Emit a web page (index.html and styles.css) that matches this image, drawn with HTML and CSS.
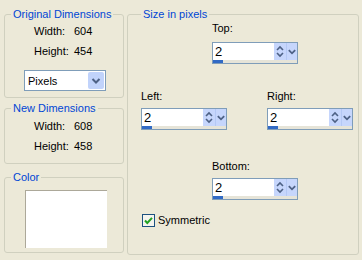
FILE: index.html
```html
<!DOCTYPE html>
<html lang="en">
<head>
    <meta charset="UTF-8">
    <title>Canvas Size</title>
    <link rel="stylesheet" href="styles.css">
</head>
<body>
    <div class="dialog">
        <div class="left-col">
            <fieldset class="group group-orig">
                <legend>Original Dimensions</legend>
                <div class="dims">
                    <span>Width:</span><span>604</span>
                    <span>Height:</span><span>454</span>
                </div>
                <div class="select">
                    <span class="select-text">Pixels</span>
                    <span class="select-btn">
                        <svg width="16" height="17" viewBox="0 0 16 17"><path d="M4.5 7 L8 10.5 L11.5 7" fill="none" stroke="#4d6185" stroke-width="2"/></svg>
                    </span>
                </div>
            </fieldset>

            <fieldset class="group group-new">
                <legend>New Dimensions</legend>
                <div class="dims">
                    <span>Width:</span><span>608</span>
                    <span>Height:</span><span>458</span>
                </div>
            </fieldset>

            <fieldset class="group group-color">
                <legend>Color</legend>
                <div class="swatch"></div>
            </fieldset>
        </div>

        <fieldset class="group group-size">
            <legend>Size in pixels</legend>

            <div class="field field-top">
                <label>Top:</label>
                <div class="spin">
                    <div class="spin-main">
                        <span class="spin-value">2</span>
                        <span class="spin-arrows"><svg width="12" height="17" viewBox="0 0 12 17"><path d="M3 7 L6 4 L9 7 M3 10 L6 13 L9 10" fill="none" stroke="#4d6185" stroke-width="1.6"/></svg></span>
                        <span class="spin-drop"><svg width="11" height="17" viewBox="0 0 11 17"><path d="M2 7 L5.5 10.5 L9 7" fill="none" stroke="#4d6185" stroke-width="2"/></svg></span>
                    </div>
                    <div class="spin-track"><span class="spin-thumb"></span></div>
                </div>
            </div>

            <div class="side-row">
                <div class="field">
                    <label>Left:</label>
                    <div class="spin">
                        <div class="spin-main">
                            <span class="spin-value">2</span>
                            <span class="spin-arrows"><svg width="12" height="17" viewBox="0 0 12 17"><path d="M3 7 L6 4 L9 7 M3 10 L6 13 L9 10" fill="none" stroke="#4d6185" stroke-width="1.6"/></svg></span>
                            <span class="spin-drop"><svg width="11" height="17" viewBox="0 0 11 17"><path d="M2 7 L5.5 10.5 L9 7" fill="none" stroke="#4d6185" stroke-width="2"/></svg></span>
                        </div>
                        <div class="spin-track"><span class="spin-thumb"></span></div>
                    </div>
                </div>
                <div class="field">
                    <label>Right:</label>
                    <div class="spin">
                        <div class="spin-main">
                            <span class="spin-value">2</span>
                            <span class="spin-arrows"><svg width="12" height="17" viewBox="0 0 12 17"><path d="M3 7 L6 4 L9 7 M3 10 L6 13 L9 10" fill="none" stroke="#4d6185" stroke-width="1.6"/></svg></span>
                            <span class="spin-drop"><svg width="11" height="17" viewBox="0 0 11 17"><path d="M2 7 L5.5 10.5 L9 7" fill="none" stroke="#4d6185" stroke-width="2"/></svg></span>
                        </div>
                        <div class="spin-track"><span class="spin-thumb"></span></div>
                    </div>
                </div>
            </div>

            <div class="field field-bottom">
                <label>Bottom:</label>
                <div class="spin">
                    <div class="spin-main">
                        <span class="spin-value">2</span>
                        <span class="spin-arrows"><svg width="12" height="17" viewBox="0 0 12 17"><path d="M3 7 L6 4 L9 7 M3 10 L6 13 L9 10" fill="none" stroke="#4d6185" stroke-width="1.6"/></svg></span>
                        <span class="spin-drop"><svg width="11" height="17" viewBox="0 0 11 17"><path d="M2 7 L5.5 10.5 L9 7" fill="none" stroke="#4d6185" stroke-width="2"/></svg></span>
                    </div>
                    <div class="spin-track"><span class="spin-thumb"></span></div>
                </div>
            </div>

            <div class="check-row">
                <svg class="check" width="13" height="13" viewBox="0 0 13 13">
                    <rect x="0.5" y="0.5" width="12" height="12" fill="#f4f4ee" stroke="#1c5180"/>
                    <path d="M3 6.5 L5.3 9 L10 3.8" fill="none" stroke="#21a121" stroke-width="2"/>
                </svg>
                <span>Symmetric</span>
            </div>
        </fieldset>
    </div>
</body>
</html>
```

FILE: styles.css
```css
body {
    margin: 0;
    background-color: #ece9d8;
    font-family: "Liberation Sans", Arial, sans-serif;
    font-size: 11px;
    color: #000;
}
.dialog {
    display: flex;
    gap: 3px;
    padding: 7px 0 0 4px;
}
.left-col {
    display: flex;
    flex-direction: column;
    width: 120px;
}
.group {
    margin: 0;
    min-width: 0;
    padding: 0 6px;
    border: 1px solid #d0d0bf;
    border-radius: 3px;
}
.group legend {
    padding: 0 2px;
    color: #0046d5;
    line-height: 14px;
}

/* left column */
.dims {
    display: grid;
    grid-template-columns: 40px auto;
    row-gap: 7px;
    line-height: 13px;
    margin-left: 23px;
}
.group-orig {
    padding-bottom: 6px;
}
.group-orig .dims {
    margin-top: 4px;
}
.select {
    display: flex;
    align-items: center;
    width: 82px;
    height: 21px;
    box-sizing: border-box;
    margin: 12px 0 0 13px;
    border: 1px solid #7f9db9;
    background-color: #fff;
}
.select-text {
    padding-left: 3px;
}
.select-btn {
    display: flex;
    margin: 0 1px 0 auto;
    width: 16px;
    height: 17px;
    background-color: #c1d3fb;
    border-radius: 2px;
}
.group-new {
    margin-top: 3px;
    padding-bottom: 10px;
}
.group-new .dims {
    margin-top: 5px;
}
.group-color {
    margin-top: 6px;
    padding-bottom: 4px;
}
.swatch {
    width: 82px;
    height: 58px;
    box-sizing: border-box;
    margin: 6px 0 0 14px;
    background-color: #fff;
    border-top: 1px solid #aca899;
    border-left: 1px solid #aca899;
}

/* right group */
.group-size {
    width: 232px;
    box-sizing: border-box;
    padding: 0 0 27px 13px;
}
.field label {
    display: block;
    line-height: 13px;
    margin-bottom: 5px;
}
.field-top {
    margin: 1px 0 0 71px;
}
.field-top label {
    margin-bottom: 7px;
}
.side-row {
    display: flex;
    justify-content: space-between;
    width: 212px;
    margin-top: 26px;
}
.field-bottom {
    margin: 30px 0 0 71px;
}
.spin {
    width: 86px;
    height: 22px;
    box-sizing: border-box;
    border: 1px solid #7f9db9;
    background-color: #fff;
}
.spin-main {
    display: flex;
    height: 17px;
}
.spin-value {
    flex: 1;
    padding-left: 2px;
    font-size: 13px;
    line-height: 17px;
}
.spin-arrows,
.spin-drop {
    display: flex;
    background-color: #c6d6fc;
}
.spin-arrows {
    width: 12px;
}
.spin-drop {
    width: 11px;
    border-left: 1px solid #b4c8f4;
    box-sizing: border-box;
}
.spin-track {
    height: 3px;
    background-color: #e6e4d8;
}
.spin-thumb {
    display: block;
    width: 10px;
    height: 3px;
    background-color: #316ac5;
}
.check-row {
    display: flex;
    align-items: center;
    gap: 3px;
    margin: 14px 0 0 1px;
    line-height: 13px;
}
```
